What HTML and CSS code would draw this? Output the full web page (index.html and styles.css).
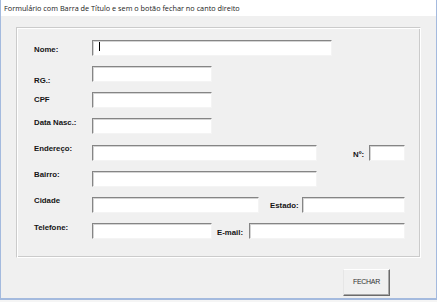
FILE: index.html
```html
<!DOCTYPE html>
<html lang="pt-BR">
<head>
<meta charset="utf-8">
<title>Formulário</title>
<link rel="stylesheet" href="styles.css">
</head>
<body>
<div class="window">
  <div class="titlebar">Formulário com Barra de Título e sem o botão fechar no canto direito</div>
  <div class="frame">
    <div class="row">
      <span class="lbl o6">Nome:</span>
      <div class="box w240"><span class="caret"></span></div>
    </div>
    <div class="row">
      <span class="lbl o11">RG.:</span>
      <div class="box w120"></div>
    </div>
    <div class="row">
      <span class="lbl o4">CPF</span>
      <div class="box w120"></div>
    </div>
    <div class="row">
      <span class="lbl o1">Data Nasc.:</span>
      <div class="box w120"></div>
    </div>
    <div class="row gap1">
      <span class="lbl o0">Endereço:</span>
      <div class="box w225"></div>
      <span class="lbl2 o6 ml36">Nº:</span>
      <div class="box w36 push"></div>
    </div>
    <div class="row">
      <span class="lbl o0">Bairro:</span>
      <div class="box w225"></div>
    </div>
    <div class="row">
      <span class="lbl o0">Cidade</span>
      <div class="box w167"></div>
      <span class="lbl2 o5 ml11">Estado:</span>
      <div class="box w103 push"></div>
    </div>
    <div class="row">
      <span class="lbl o1">Telefone:</span>
      <div class="box w120"></div>
      <span class="lbl2 o6 ml5">E-mail:</span>
      <div class="box w156 push"></div>
    </div>
  </div>
  <div class="actions">
    <button class="btn" type="button">FECHAR</button>
  </div>
</div>
</body>
</html>
```
FILE: styles.css
```css
html, body {
  margin: 0;
  padding: 0;
  background: #f5f5f5;
}

.window {
  width: 437px;
  height: 300px;
  box-sizing: border-box;
  border-style: solid;
  border-color: #a4bade;
  border-width: 0 1px 2px 1px;
  background: #f0f0f0;
  display: flex;
  flex-direction: column;
}

.titlebar {
  height: 16px;
  line-height: 16px;
  background: #ffffff;
  padding-left: 3px;
  font-family: "Open Sans", "Noto Sans", sans-serif;
  font-size: 7.3px;
  color: #1a1a1a;
  white-space: nowrap;
}

.frame {
  margin: 11px 0 0 15px;
  width: 405px;
  height: 231px;
  box-sizing: border-box;
  border: 1px solid;
  border-color: #cbcbcb #ffffff #ffffff #cbcbcb;
  box-shadow: inset 1px 1px 0 #ffffff, inset -1px -1px 0 #cbcbcb;
  padding: 12px 15px 0 17px;
  display: flex;
  flex-direction: column;
  gap: 10px;
}

.row {
  height: 16px;
  display: flex;
  align-items: flex-start;
}

.row.gap1 {
  margin-top: 1px;
}

.lbl, .lbl2 {
  font-family: "Liberation Sans", Arial, sans-serif;
  font-weight: bold;
  font-size: 7.8px;
  line-height: 8px;
  color: #141414;
  white-space: nowrap;
}

.lbl {
  width: 58px;
  flex-shrink: 0;
}

.o0 { margin-top: 0; }
.o1 { margin-top: 1px; }
.o4 { margin-top: 4px; }
.o5 { margin-top: 5px; }
.o6 { margin-top: 6px; }
.o11 { margin-top: 11px; }

.ml5 { margin-left: 5px; }
.ml11 { margin-left: 11px; }
.ml36 { margin-left: 36px; }

.box {
  height: 16px;
  box-sizing: border-box;
  background: #ffffff;
  border: 1px solid;
  border-color: #858585 #f4f4f4 #f4f4f4 #858585;
  box-shadow: inset 1px 1px 0 #d4d4d4;
  flex-shrink: 0;
  display: flex;
  align-items: flex-start;
  padding: 1px 0 0 6px;
}

.push { margin-left: auto; }

.w240 { width: 240px; }
.w225 { width: 225px; }
.w167 { width: 167px; }
.w156 { width: 156px; }
.w120 { width: 120px; }
.w103 { width: 103px; }
.w36 { width: 36px; }

.caret {
  width: 1px;
  height: 9px;
  background: #000000;
}

.actions {
  display: flex;
  justify-content: flex-end;
  padding: 11px 46px 0 0;
}

.btn {
  width: 47px;
  height: 27px;
  margin: 0;
  padding: 0 0 2px 0;
  box-sizing: border-box;
  background: #f0f0f0;
  border: 1px solid;
  border-color: #ffffff #6b6b6b #6b6b6b #e6e6e6;
  box-shadow: inset -1px -1px 0 #a8a8a8;
  font-family: "Liberation Sans", Arial, sans-serif;
  font-size: 7px;
  letter-spacing: -0.3px;
  color: #333333;
}
```
